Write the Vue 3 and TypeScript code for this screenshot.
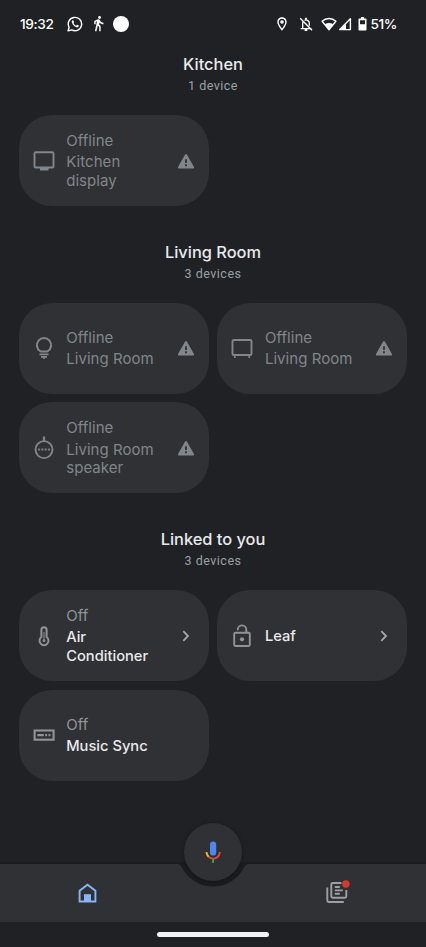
<script setup lang="ts">
type IconName = 'display' | 'bulb' | 'tv' | 'speaker' | 'thermo' | 'lock' | 'receiver'
interface Device {
  name: string
  status?: string
  icon: IconName
  trailing?: 'warning' | 'chevron'
  active?: boolean
}
interface Room {
  title: string
  count: string
  devices: Device[]
}

const rooms: Room[] = [
  {
    title: 'Kitchen',
    count: '1 device',
    devices: [{ name: 'Kitchen display', status: 'Offline', icon: 'display', trailing: 'warning' }],
  },
  {
    title: 'Living Room',
    count: '3 devices',
    devices: [
      { name: 'Living Room', status: 'Offline', icon: 'bulb', trailing: 'warning' },
      { name: 'Living Room', status: 'Offline', icon: 'tv', trailing: 'warning' },
      { name: 'Living Room speaker', status: 'Offline', icon: 'speaker', trailing: 'warning' },
    ],
  },
  {
    title: 'Linked to you',
    count: '3 devices',
    devices: [
      { name: 'Air Conditioner', status: 'Off', icon: 'thermo', trailing: 'chevron', active: true },
      { name: 'Leaf', icon: 'lock', trailing: 'chevron', active: true },
      { name: 'Music Sync', status: 'Off', icon: 'receiver', active: true },
    ],
  },
]
</script>

<template>
  <div class="screen">
    <header class="status-bar">
      <div class="left">
        <span class="clock">19:32</span>
        <svg class="whatsapp" width="16" height="16" viewBox="0 0 16 16" fill="none">
          <path d="M1.100 14.900l1-3.600a6.700 6.700 0 1 1 2.600 2.600z" stroke="#fff" stroke-width="1.400" stroke-linejoin="round" />
          <path d="M5.600 4.300c-.8.500-1 1.500-.5 2.600.9 2.100 2.300 3.500 4.300 4.300 1.100.4 2.100.1 2.300-1.100l.1-.5-1.800-.9-.9 1c-1.200-.5-2.200-1.400-2.700-2.600l.7-.9-.8-1.900z" fill="#fff" />
        </svg>
        <svg class="walk" width="17" height="17" viewBox="0 0 24 24" fill="#fff">
          <path d="M13.500 5.500c1.100 0 2-.9 2-2s-.9-2-2-2-2 .9-2 2 .9 2 2 2zM9.800 8.900L7 23h2.100l1.800-8 2.100 2v6h2v-7.500l-2.100-2 .6-3C14.800 12 16.800 13 19 13v-2c-1.900 0-3.500-1-4.300-2.400l-1-1.600c-.4-.6-1-1-1.700-1-.3 0-.5.1-.8.1L6 8.300V13h2V9.600l1.800-.7" />
        </svg>
        <span class="dot"></span>
      </div>
      <div class="right">
        <svg class="pin" width="16" height="16" viewBox="0 0 24 24" fill="#fff">
          <path d="M12 2C8.130 2 5 5.130 5 9c0 5.250 7 13 7 13s7-7.750 7-13c0-3.870-3.130-7-7-7zM7 9c0-2.760 2.240-5 5-5s5 2.240 5 5c0 2.880-2.880 7.190-5 9.880C9.920 16.210 7 11.850 7 9z" />
          <circle cx="12" cy="9" r="2.700" />
        </svg>
        <svg class="bell" width="16" height="16" viewBox="0 0 24 24" fill="none" stroke="#fff" stroke-width="2">
          <path d="M4 19h16M7 18.500V11.500a5.500 5.500 0 0 1 1-3.300M9.800 6.500A5 5 0 0 1 17 11.500v3" />
          <path d="M3.300 3.500L21 21.300" />
          <path d="M12 2.500v3M10 21h4" stroke-width="2.800" />
        </svg>
        <svg class="wifi" width="16" height="14" viewBox="0 0 16 14">
          <path d="M1.100 4.300C5 .6 11 .6 14.900 4.300L8 12.700z" fill="none" stroke="#fff" stroke-width="1.400" stroke-linejoin="round" />
          <path d="M3.800 7.300c2.500-1.700 5.900-1.700 8.400 0L8 12.800z" fill="#fff" />
        </svg>
        <svg class="signal" width="14" height="14" viewBox="0 0 14 14">
          <path d="M12.400 1.800v10.800H1.700z" fill="none" stroke="#fff" stroke-width="1.400" stroke-linejoin="round" />
          <path d="M8 7v5.500H2z" fill="#fff" />
        </svg>
        <svg class="battery" width="9" height="14" viewBox="0 0 9 14">
          <path d="M3 0h3v1.500h1.700q.8 0 .8.800v10.400q0 .8-.8.800H1.300q-.8 0-.8-.8V2.300q0-.8.800-.8H3zM2 3.300v3.900h5V3.300z" fill="#fff" fill-rule="evenodd" />
        </svg>
        <span class="percent">51%</span>
      </div>
    </header>

    <main class="rooms">
      <section v-for="room in rooms" :key="room.title" class="room">
        <div class="room-head">
          <h2>{{ room.title }}</h2>
          <p>{{ room.count }}</p>
        </div>
        <div class="grid">
          <article v-for="(device, i) in room.devices" :key="i" class="card" :class="{ active: device.active }">
            <svg class="device-icon" width="24" height="24" viewBox="0 0 24 24" fill="none" stroke="currentColor" stroke-width="1.900">
              <template v-if="device.icon === 'display'">
                <rect x="2.500" y="3.300" width="19" height="15.200" rx="1.300" />
                <path d="M8 20.200h8.500" stroke-width="2.600" />
              </template>
              <template v-else-if="device.icon === 'bulb'">
                <path d="M8.500 15.400a7.100 7.100 0 1 1 7 0z" stroke-width="2" stroke-linejoin="round" />
                <path d="M7.500 18.400h9M9 20.800h6" stroke-width="1.700" />
                <path d="M12 20.500v2.300" stroke-width="2" />
              </template>
              <template v-else-if="device.icon === 'tv'">
                <rect x="2.500" y="4" width="19" height="15" rx="1.300" />
                <path d="M4.800 19.500v2.400M19.200 19.500v2.400" stroke-width="1.600" />
              </template>
              <template v-else-if="device.icon === 'speaker'">
                <circle cx="12" cy="13.600" r="8.500" />
                <path d="M12 0.500v4.500" stroke-width="2.200" />
                <path d="M6.300 13.600h12" stroke-width="2" stroke-dasharray="1.900 1.300" />
              </template>
              <template v-else-if="device.icon === 'thermo'">
                <path d="M9.400 13V5.800a2.600 2.600 0 0 1 5.200 0V13a4.500 4.500 0 1 1-5.200 0z" stroke-width="2" />
                <path d="M12 8v8.500" stroke-width="1" />
                <circle cx="12" cy="16.700" r="1.400" fill="currentColor" stroke="none" />
              </template>
              <template v-else-if="device.icon === 'lock'">
                <rect x="4.200" y="8.700" width="15.600" height="13.300" rx="1.200" />
                <path d="M7.700 6.200V5.700a4.300 4.300 0 0 1 8.600 0v3" />
                <circle cx="12" cy="15.300" r="2.100" fill="currentColor" stroke="none" />
              </template>
              <template v-else>
                <rect x="2.600" y="7.500" width="19" height="9.200" stroke-width="2.100" />
                <path d="M5.300 12.100h6.500M13.200 12.100h1.900M16.500 12.100h1.900" stroke-width="2.300" />
              </template>
            </svg>
            <div class="label">
              <span v-if="device.status" class="status">{{ device.status }}</span>
              <span class="name">{{ device.name }}</span>
            </div>
            <svg v-if="device.trailing === 'warning'" class="trailing" width="18" height="18" viewBox="0 0 18 18">
              <path d="M9 3L16.100 15.600H1.900z" fill="currentColor" stroke="currentColor" stroke-width="2" stroke-linejoin="round" />
              <path d="M9 7.300v3.600M9 12.300v2" stroke="#303134" stroke-width="1.800" />
            </svg>
            <svg v-else-if="device.trailing === 'chevron'" class="trailing" width="18" height="18" viewBox="0 0 18 18">
              <path d="M6.300 4.200l4.700 4.800-4.700 4.800" fill="none" stroke="#a4a8ad" stroke-width="1.800" />
            </svg>
          </article>
        </div>
      </section>
    </main>

    <footer class="bottom">
      <nav class="nav">
        <svg class="notch" width="90" height="32" viewBox="0 0 90 32">
          <path d="M0 0H10Q12.500 .4 13.600 3A35 35 0 0 0 76.400 3Q77.500 .4 80 0H90V-1H0z" fill="#1b1c1f" />
        </svg>
        <button class="tab" aria-label="Home">
          <svg width="24" height="24" viewBox="0 0 24 24">
            <path d="M4.600 20.500V9.700L12.500 3.700l7.900 6v10.800z" fill="none" stroke="#8ab4f8" stroke-width="1.900" />
            <path d="M9 13.200h7v7.300H9z" fill="#8ab4f8" />
          </svg>
        </button>
        <button class="tab feed" aria-label="Feed">
          <svg width="28" height="28" viewBox="0 0 28 28" fill="none" stroke="#9aa0a6" stroke-width="1.900">
            <path d="M4.300 8.500v13.100q0 1.400 1.400 1.400h15.100" />
            <path d="M18.500 4H9.800Q8.300 4 8.300 5.500v11.800q0 1.500 1.500 1.500h12q1.500 0 1.500-1.500V11" />
            <path d="M11.800 8h5M11.800 11.400h8M11.800 14.800h5" />
            <circle cx="22.900" cy="5" r="3.700" fill="#d33b2f" stroke="none" />
          </svg>
        </button>
        <button class="mic" aria-label="Voice">
          <svg width="24" height="24" viewBox="0 0 24 24" fill="none">
            <rect x="9" y="1.600" width="6.200" height="14" rx="3.100" fill="#4c86f0" />
            <path d="M5.500 12a6.600 6.600 0 0 0 2.300 5" stroke="#f5b81f" stroke-width="1.900" />
            <path d="M7.600 16.800a6.600 6.600 0 0 0 11.100-4.800" stroke="#e0483b" stroke-width="1.900" />
            <path d="M12.100 19.300v3.600" stroke="#3fa757" stroke-width="1.900" />
          </svg>
        </button>
      </nav>
      <div class="gesture"><span></span></div>
    </footer>
  </div>
</template>

<style>
body {
  background: #202124;
}
</style>

<style scoped>
.screen {
  display: flex;
  flex-direction: column;
  width: 426px;
  height: 947px;
  overflow: hidden;
  background: #202124;
  color: #e8eaed;
  font-family: Inter, Roboto, sans-serif;
}
.status-bar {
  display: flex;
  justify-content: space-between;
  height: 47px;
  padding: 0 29px 0 20px;
  color: #fff;
}
.left,
.right {
  display: flex;
  align-items: center;
}
.clock,
.percent {
  font-size: 13.700px;
  font-weight: 500;
  letter-spacing: -0.400px;
}
.clock {
  width: 47px;
}
.whatsapp {
  margin-right: 7px;
}
.dot {
  width: 16px;
  height: 16px;
  margin-left: 5.500px;
  border-radius: 50%;
  background: #fff;
}
.bell {
  margin-left: 8px;
}
.wifi {
  margin-left: 7px;
}
.signal {
  margin-left: 1px;
}
.battery {
  margin: 0 3.500px 0 6px;
}
.rooms {
  display: flex;
  flex-direction: column;
  gap: 28.500px;
  flex: 1;
  padding: 0 18.500px;
}
.room-head {
  display: flex;
  flex-direction: column;
  align-items: center;
  height: 68px;
}
h2 {
  margin: 5px 0 0;
  font-size: 16.400px;
  font-weight: 500;
  line-height: 24px;
}
p {
  margin: 1.200px 0 0;
  font-family: Roboto, sans-serif;
  font-size: 12.500px;
  line-height: 18.500px;
  letter-spacing: 0.500px;
  color: #9aa0a6;
}
.grid {
  display: grid;
  grid-template-columns: 190.300px 190.300px;
  grid-auto-rows: 91.200px;
  gap: 8.400px;
}
.card {
  display: flex;
  align-items: center;
  padding: 0 14px 0 13px;
  border-radius: 33px;
  background: #303134;
  color: #80868b;
}
.device-icon {
  flex: none;
}
.label {
  display: flex;
  flex-direction: column;
  gap: 3px;
  flex: 1;
  margin-left: 10.700px;
  padding: 1.400px 18px 0 0;
  font-size: 15px;
  line-height: 18.700px;
  letter-spacing: 0.050px;
}
.trailing {
  flex: none;
}
.active {
  color: #8f9499;
}
.active .name {
  font-size: 14.700px;
  font-weight: 500;
  letter-spacing: 0;
  color: #e8eaed;
}
.bottom {
  display: flex;
  flex-direction: column;
}
.nav {
  position: relative;
  display: grid;
  grid-template-columns: 174px 1fr 178px;
  height: 58px;
  background: #303134;
  box-shadow: 0 -1px 2px rgba(0, 0, 0, 0.25);
}
.tab {
  display: flex;
  align-items: center;
  justify-content: center;
  padding: 0;
  border: 0;
  background: none;
}
.feed {
  grid-column: 3;
}
.notch {
  position: absolute;
  top: 0;
  left: 168px;
}
.mic {
  position: absolute;
  top: -41px;
  left: 184px;
  display: flex;
  align-items: center;
  justify-content: center;
  width: 58px;
  height: 58px;
  padding: 0;
  border: 0;
  border-radius: 50%;
  background: #303134;
  box-shadow: 0 1px 4px rgba(0, 0, 0, 0.3);
}
.gesture {
  display: flex;
  justify-content: center;
  height: 25px;
  padding-top: 10px;
  box-sizing: border-box;
}
.gesture span {
  width: 112px;
  height: 5px;
  border-radius: 3px;
  background: #f3f3f3;
}
</style>
